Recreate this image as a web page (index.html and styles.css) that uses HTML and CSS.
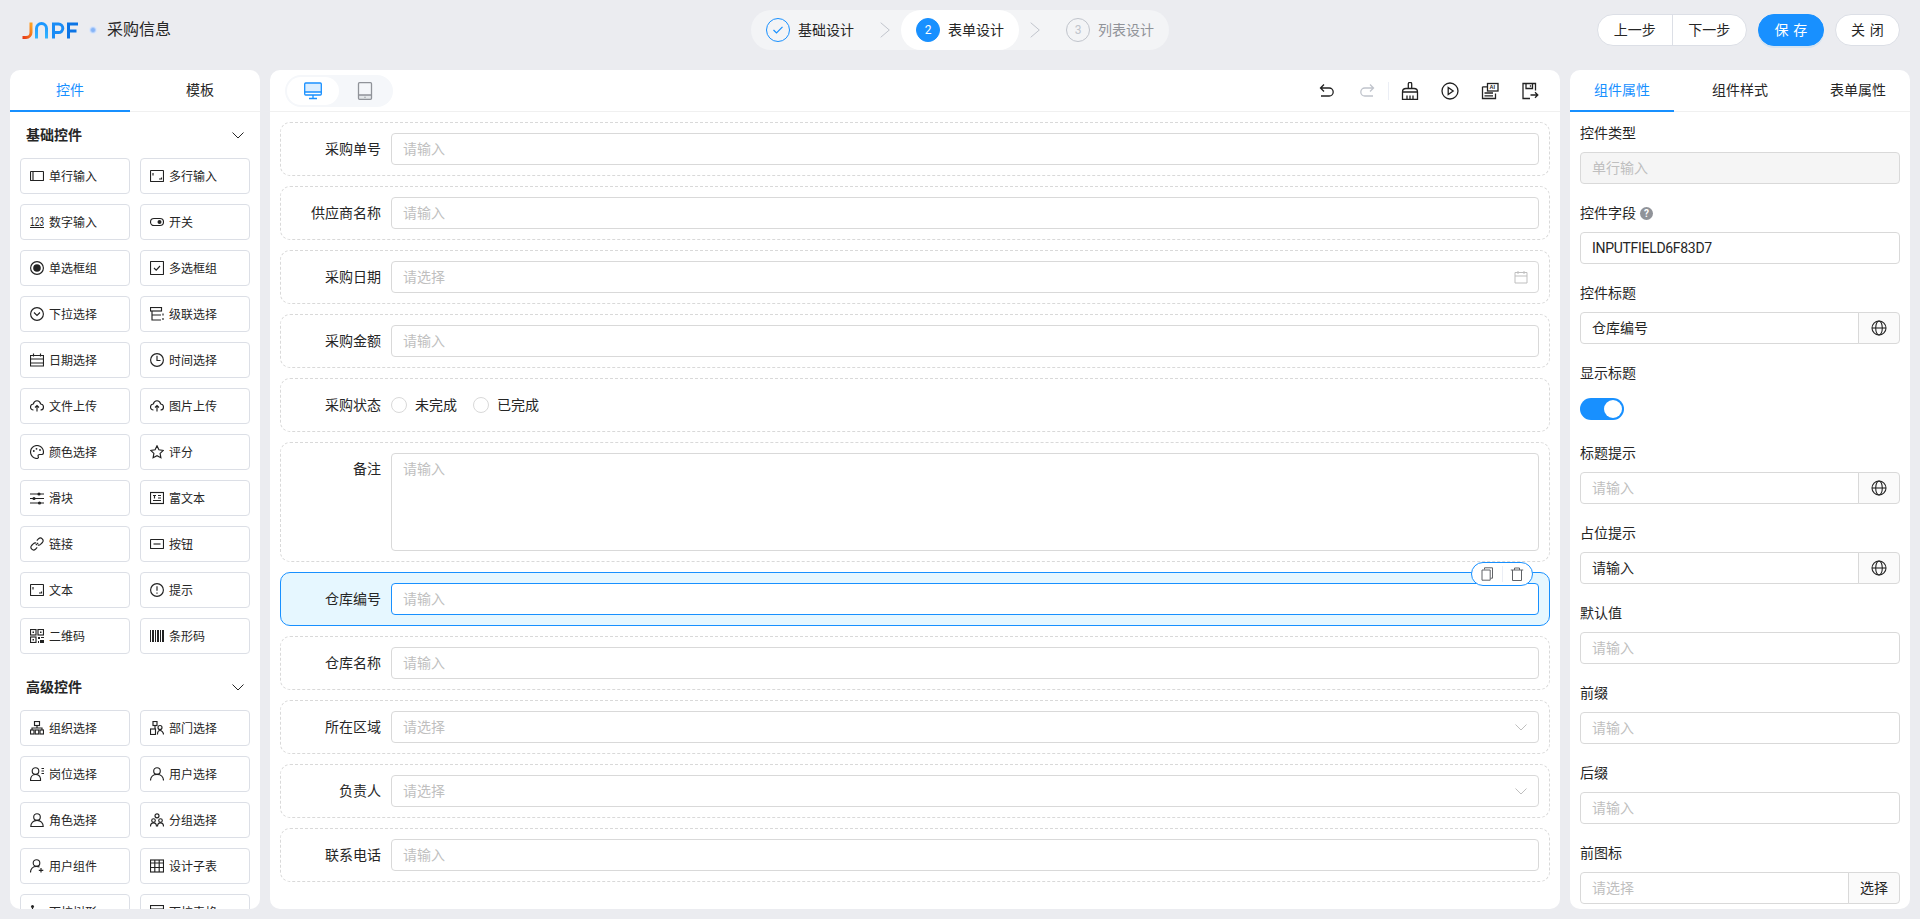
FILE: index.html
```html
<!DOCTYPE html>
<html lang="zh-CN">
<head>
<meta charset="utf-8">
<title>采购信息</title>
<link rel="stylesheet" href="styles.css">
</head>
<body>
<svg class="defs" xmlns="http://www.w3.org/2000/svg">
  <symbol id="i-input" viewBox="0 0 14 14"><rect x=".5" y="2.500" width="13" height="9" rx=".5"/><path d="M3 3v8"/></symbol>
  <symbol id="i-area" viewBox="0 0 14 14"><rect x=".5" y="1.500" width="13" height="11" rx=".5"/><path d="M3 4v2.500M9 10h2.500V8.500"/></symbol>
  <symbol id="i-num" viewBox="0 0 14 14"><text x="0" y="10.500" class="svgt" textLength="14" lengthAdjust="spacingAndGlyphs">123</text><path d="M0 12.500h14"/></symbol>
  <symbol id="i-switch" viewBox="0 0 14 14"><rect x=".5" y="3.500" width="13" height="7" rx="3.500"/><circle cx="9.500" cy="7" r="2" class="fill"/></symbol>
  <symbol id="i-radio" viewBox="0 0 14 14"><circle cx="7" cy="7" r="6.400"/><circle cx="7" cy="7" r="3.800" class="fill"/></symbol>
  <symbol id="i-check" viewBox="0 0 14 14"><rect x=".5" y=".5" width="13" height="13" rx=".5"/><path d="M4 7l2.200 2.200L10 5"/></symbol>
  <symbol id="i-select" viewBox="0 0 14 14"><circle cx="7" cy="7" r="6.400"/><path d="M4 5.500L7 8.500 10 5.500"/></symbol>
  <symbol id="i-casc" viewBox="0 0 14 14"><rect x=".5" y=".5" width="11" height="3.500"/><path d="M2 4v9h9M2 8h9"/><path d="M13 6.500v2M13 11v2"/></symbol>
  <symbol id="i-date" viewBox="0 0 14 14"><path d="M.5 2.500h13v10.500H.5zM3.500 .5v3M10.500 .5v3M.5 6h13M.5 10h13"/></symbol>
  <symbol id="i-time" viewBox="0 0 14 14"><circle cx="7" cy="7" r="6.400"/><path d="M7 2.800V7.500h3.500"/></symbol>
  <symbol id="i-upload" viewBox="0 0 14 14"><path d="M3.500 11C1.700 11 .5 9.600 .5 8c0-1.600 1.200-2.900 2.800-3C3.800 3 5.300 1.700 7 1.700S10.200 3 10.700 5c1.600.1 2.800 1.400 2.800 3 0 1.600-1.200 3-3 3M7 12.500V6.500M5 8.500l2-2 2 2"/></symbol>
  <symbol id="i-color" viewBox="0 0 14 14"><path d="M7 .5a6.500 6.500 0 1 0 0 13c1.400 0 1.700-1.100 1.200-2-.5-1 .2-2 1.300-2h2.300c1 0 1.700-.8 1.700-2.200C13.500 3.300 10.600 .5 7 .5z"/><circle cx="3.800" cy="6" r=".9" class="fill"/><circle cx="6.500" cy="3.800" r=".9" class="fill"/><circle cx="10" cy="5" r=".9" class="fill"/></symbol>
  <symbol id="i-star" viewBox="0 0 14 14"><path d="M7 .8l1.900 4 4.400.6-3.200 3 .8 4.400L7 10.700l-3.900 2.100.8-4.400-3.200-3 4.400-.6z"/></symbol>
  <symbol id="i-slider" viewBox="0 0 14 14"><path d="M0 3h14M0 7.500h14M0 12h14"/><circle cx="9" cy="3" r="1.600" class="fill"/><circle cx="4" cy="7.500" r="1.600" class="fill"/><circle cx="9.500" cy="12" r="1.600" class="fill"/></symbol>
  <symbol id="i-rich" viewBox="0 0 14 14"><rect x=".5" y="1.500" width="13" height="11"/><path d="M3 4.500h3M4.500 4.500v3M8 4.500h3M8 7h3M3 9.500h8"/></symbol>
  <symbol id="i-link" viewBox="0 0 14 14"><path d="M5.800 8.200l2.400-2.400M6.800 3.600l1.800-1.900a2.700 2.700 0 0 1 3.800 3.800l-1.900 1.900a2.700 2.700 0 0 1-2.700.6M7.200 10.400l-1.800 1.900a2.700 2.700 0 0 1-3.800-3.800l1.900-1.900a2.700 2.700 0 0 1 2.700-.6"/></symbol>
  <symbol id="i-btn" viewBox="0 0 14 14"><rect x=".5" y="2.500" width="13" height="9" rx=".5"/><path d="M3.500 7h7"/></symbol>
  <symbol id="i-tip" viewBox="0 0 14 14"><circle cx="7" cy="7" r="6.400"/><path d="M7 3.300v4.500M7 9.500v1.300"/></symbol>
  <symbol id="i-qr" viewBox="0 0 14 14"><rect x=".5" y=".5" width="5.500" height="5.500"/><rect x="8" y=".5" width="5.500" height="5.500"/><rect x=".5" y="8" width="5.500" height="5.500"/><rect x="2.500" y="2.500" width="1.500" height="1.500" class="fill"/><rect x="10" y="2.500" width="1.500" height="1.500" class="fill"/><rect x="2.500" y="10" width="1.500" height="1.500" class="fill"/><rect x="8" y="8" width="2" height="2" class="fill"/><rect x="11" y="8" width="3" height="1" class="fill"/><rect x="10" y="11" width="4" height="3" class="fill"/><rect x="8" y="12" width="1" height="2" class="fill"/></symbol>
  <symbol id="i-bar" viewBox="0 0 14 14"><rect x="0" y="1" width="1" height="12" class="fill"/><rect x="2" y="1" width="2" height="12" class="fill"/><rect x="5" y="1" width="1" height="12" class="fill"/><rect x="7" y="1" width="2" height="12" class="fill"/><rect x="10" y="1" width="1" height="12" class="fill"/><rect x="12" y="1" width="2" height="12" class="fill"/></symbol>
  <symbol id="i-org" viewBox="0 0 14 14"><rect x="4.500" y=".5" width="5" height="4"/><path d="M7 4.500V7M2 9V7h10v2"/><rect x=".5" y="9" width="3.500" height="4"/><rect x="5.250" y="9" width="3.500" height="4"/><rect x="10" y="9" width="3.500" height="4"/></symbol>
  <symbol id="i-dept" viewBox="0 0 14 14"><rect x="3" y=".5" width="4" height="4"/><rect x=".5" y="8" width="5" height="5.500"/><circle cx="10" cy="6.500" r="2"/><path d="M7.500 13.500c0-2.500 1-4 2.500-4s3.500 1.500 3.500 4M5 4.500V8"/></symbol>
  <symbol id="i-post" viewBox="0 0 14 14"><circle cx="5.500" cy="4" r="3.300"/><path d="M.5 13.500c0-3.500 2-6 5-6s4.500 1.500 5 4v2zM11.500 1.500H14M11.500 4H14M11.500 6.500H14"/></symbol>
  <symbol id="i-user" viewBox="0 0 14 14"><circle cx="7" cy="4" r="3.300"/><path d="M.5 13.500c0-3.500 2.500-6.200 6.500-6.200s6.500 2.700 6.500 6.200"/></symbol>
  <symbol id="i-role" viewBox="0 0 14 14"><circle cx="7" cy="4" r="3.300"/><path d="M.8 13.500c0-3.500 2.500-6.200 6.200-6.200s6.200 2.700 6.200 6.200z"/></symbol>
  <symbol id="i-group" viewBox="0 0 14 14"><circle cx="7" cy="2.800" r="2"/><circle cx="3.500" cy="7.500" r="1.800"/><circle cx="10.500" cy="7.500" r="1.800"/><path d="M.5 13.500c0-2.300 1.200-3.700 3-3.700s3 1.400 3 3.700M7.500 13.500c0-2.300 1.200-3.700 3-3.700s3 1.400 3 3.700"/></symbol>
  <symbol id="i-ucomp" viewBox="0 0 14 14"><circle cx="6.500" cy="4" r="3.300"/><path d="M.5 13.500c0-3.500 2.300-6.200 6-6.200 1.200 0 2.300.3 3 .8M11 9v4.500M8.800 11.300h4.500"/></symbol>
  <symbol id="i-table" viewBox="0 0 14 14"><rect x=".5" y="1" width="13" height="12"/><path d="M.5 4h13M.5 8.500h13M4.800 1v12M9.200 1v12"/></symbol>
  <symbol id="i-tree" viewBox="0 0 14 14"><circle cx="2.500" cy="1.500" r="1.500" class="fill"/><path d="M2.500 3v8H13M2.500 6.500H13"/></symbol>
  <symbol id="i-dtable" viewBox="0 0 14 14"><rect x=".5" y=".5" width="13" height="13"/><path d="M.5 4h13M.5 8.500h13"/></symbol>

  <symbol id="t-undo" viewBox="0 0 18 18"><path d="M6 2.500L2.500 6 6 9.500M2.500 6h8.700a3.800 3.800 0 0 1 0 8H3"/></symbol>
  <symbol id="t-redo" viewBox="0 0 18 18"><path d="M12 2.500L15.500 6 12 9.500M15.500 6H6.800a3.800 3.800 0 0 0 0 8H15"/></symbol>
  <symbol id="t-brush" viewBox="0 0 18 18"><path d="M7.300 6.500V2a1.700 1.700 0 0 1 3.400 0v4.500M1.500 10C1.500 8 3 6.500 5 6.500h8c2 0 3.500 1.500 3.500 3.500zM1.500 10v7.500h15V10M6 13.500v4M9 13.500v4M12 13.500v4"/></symbol>
  <symbol id="t-play" viewBox="0 0 18 18"><circle cx="9" cy="9" r="8"/><path d="M7.200 5.500v7l5-3.500z"/></symbol>
  <symbol id="t-ai" viewBox="0 0 18 18"><path d="M1.500 4.800h5M1.500 4.800v11.700h13v-5M3.500 11h8.500M3.500 13.800h8.500"/><rect x="6.500" y="1.500" width="10.500" height="7.500"/><text x="8.500" y="7.300" class="svgai">AI</text></symbol>
  <symbol id="t-save" viewBox="0 0 18 18"><path d="M9 16.500H2V1.500h12.500v7M5 1.500v5h6.500v-5M16.800 13H9.500M14 10.300l2.800 2.700-2.800 2.700M9.500 3.300v1.500"/></symbol>

  <symbol id="d-pc" viewBox="0 0 18 18"><rect x=".7" y="1" width="16.600" height="12" rx="1"/><path d="M.7 10h16.600M9 13v3M5 16.500h8"/><rect x="1" y="1.500" width="16" height="8.500" class="tint"/></symbol>
  <symbol id="d-pad" viewBox="0 0 18 18"><rect x="2.500" y=".7" width="13" height="16.600" rx="1"/><path d="M2.500 13h13M9 14.800v.9"/><rect x="3" y="13" width="12" height="4" class="tint"/></symbol>
  <symbol id="u-copy" viewBox="0 0 14 14"><path d="M4.500 2.500V.8h8v10.400h-2M2 3h8.200v10.200H2z"/></symbol>
  <symbol id="u-trash" viewBox="0 0 14 14"><path d="M.8 3h12.400M4.500 3V1h5v2M2.500 3v10.500h9V3"/></symbol>
  <symbol id="u-cal" viewBox="0 0 14 14"><path d="M1 2.500h12v10.500H1zM1 6h12M4 1v3M10 1v3"/></symbol>
  <symbol id="u-down" viewBox="0 0 14 14"><path d="M1.500 4.500L7 10l5.500-5.500"/></symbol>
  <symbol id="u-globe" viewBox="0 0 16 16"><circle cx="8" cy="8" r="7"/><ellipse cx="8" cy="8" rx="3.300" ry="7"/><path d="M1 8h14"/></symbol>
  <symbol id="u-chev" viewBox="0 0 10 16"><path d="M.7 .7L9.300 8 .7 15.300"/></symbol>
</svg>

<header class="topbar">
  <div class="brand">
    <svg class="logo" viewBox="0 0 56 17" role="img" aria-label="JNPF">
      <defs>
        <linearGradient id="lg-j" x1="0.800" y1="0" x2="0" y2="1"><stop offset="0" stop-color="#ffa020"/><stop offset="1" stop-color="#e63a1a"/></linearGradient>
        <linearGradient id="lg-n" x1="0" y1="0" x2="0" y2="1"><stop offset="0" stop-color="#1a96ff"/><stop offset="1" stop-color="#35b6ff"/></linearGradient>
      </defs>
      <path d="M9 .5V10.500a5 5 0 0 1-5 5H.5" stroke="url(#lg-j)"/>
      <path d="M14.500 16.500V6.500a5 5 0 0 1 10 0v10" stroke="url(#lg-n)"/>
      <path d="M31.500 16.500V2H36.500a4.300 4.300 0 0 1 0 8.600H31.500" stroke="#1a8cf5"/>
      <path d="M46.500 16.500V2H56M46.500 9H54.500" stroke="#0b74e5"/>
    </svg>
    <span class="brand-dot"></span>
    <span class="brand-title">采购信息</span>
  </div>
  <nav class="steps">
    <div class="step"><span class="step-no done"><svg viewBox="0 0 12 12" class="step-check"><path d="M1.500 6l3 3L10.500 2.800"/></svg></span><span>基础设计</span></div>
    <svg class="step-sep"><use href="#u-chev"/></svg>
    <div class="step active"><span class="step-no cur">2</span><span>表单设计</span></div>
    <svg class="step-sep"><use href="#u-chev"/></svg>
    <div class="step wait"><span class="step-no">3</span><span>列表设计</span></div>
  </nav>
  <div class="actions">
    <div class="btn-group"><span class="btn-seg">上一步</span><span class="btn-seg">下一步</span></div>
    <span class="btn primary"><span class="two">保存</span></span>
    <span class="btn"><span class="two">关闭</span></span>
  </div>
</header>

<main class="workspace">
  <aside class="panel left">
    <div class="tabs tabs-left"><span class="tab on">控件</span><span class="tab">模板</span></div>
    <div class="palette">
      <div class="pal-head"><span>基础控件</span><svg class="ic pal-arrow"><use href="#u-down"/></svg></div>
      <div class="pal-grid">
        <div class="pal-item"><svg class="ic"><use href="#i-input"/></svg><span>单行输入</span></div>
        <div class="pal-item"><svg class="ic"><use href="#i-area"/></svg><span>多行输入</span></div>
        <div class="pal-item"><svg class="ic"><use href="#i-num"/></svg><span>数字输入</span></div>
        <div class="pal-item"><svg class="ic"><use href="#i-switch"/></svg><span>开关</span></div>
        <div class="pal-item"><svg class="ic"><use href="#i-radio"/></svg><span>单选框组</span></div>
        <div class="pal-item"><svg class="ic"><use href="#i-check"/></svg><span>多选框组</span></div>
        <div class="pal-item"><svg class="ic"><use href="#i-select"/></svg><span>下拉选择</span></div>
        <div class="pal-item"><svg class="ic"><use href="#i-casc"/></svg><span>级联选择</span></div>
        <div class="pal-item"><svg class="ic"><use href="#i-date"/></svg><span>日期选择</span></div>
        <div class="pal-item"><svg class="ic"><use href="#i-time"/></svg><span>时间选择</span></div>
        <div class="pal-item"><svg class="ic"><use href="#i-upload"/></svg><span>文件上传</span></div>
        <div class="pal-item"><svg class="ic"><use href="#i-upload"/></svg><span>图片上传</span></div>
        <div class="pal-item"><svg class="ic"><use href="#i-color"/></svg><span>颜色选择</span></div>
        <div class="pal-item"><svg class="ic"><use href="#i-star"/></svg><span>评分</span></div>
        <div class="pal-item"><svg class="ic"><use href="#i-slider"/></svg><span>滑块</span></div>
        <div class="pal-item"><svg class="ic"><use href="#i-rich"/></svg><span>富文本</span></div>
        <div class="pal-item"><svg class="ic"><use href="#i-link"/></svg><span>链接</span></div>
        <div class="pal-item"><svg class="ic"><use href="#i-btn"/></svg><span>按钮</span></div>
        <div class="pal-item"><svg class="ic"><use href="#i-area"/></svg><span>文本</span></div>
        <div class="pal-item"><svg class="ic"><use href="#i-tip"/></svg><span>提示</span></div>
        <div class="pal-item"><svg class="ic"><use href="#i-qr"/></svg><span>二维码</span></div>
        <div class="pal-item"><svg class="ic"><use href="#i-bar"/></svg><span>条形码</span></div>
      </div>
      <div class="pal-head"><span>高级控件</span><svg class="ic pal-arrow"><use href="#u-down"/></svg></div>
      <div class="pal-grid">
        <div class="pal-item"><svg class="ic"><use href="#i-org"/></svg><span>组织选择</span></div>
        <div class="pal-item"><svg class="ic"><use href="#i-dept"/></svg><span>部门选择</span></div>
        <div class="pal-item"><svg class="ic"><use href="#i-post"/></svg><span>岗位选择</span></div>
        <div class="pal-item"><svg class="ic"><use href="#i-user"/></svg><span>用户选择</span></div>
        <div class="pal-item"><svg class="ic"><use href="#i-role"/></svg><span>角色选择</span></div>
        <div class="pal-item"><svg class="ic"><use href="#i-group"/></svg><span>分组选择</span></div>
        <div class="pal-item"><svg class="ic"><use href="#i-ucomp"/></svg><span>用户组件</span></div>
        <div class="pal-item"><svg class="ic"><use href="#i-table"/></svg><span>设计子表</span></div>
        <div class="pal-item"><svg class="ic"><use href="#i-tree"/></svg><span>下拉树形</span></div>
        <div class="pal-item"><svg class="ic"><use href="#i-dtable"/></svg><span>下拉表格</span></div>
      </div>
    </div>
  </aside>

  <section class="panel center">
    <div class="toolbar">
      <div class="device">
        <span class="dev on"><svg class="dev-ic"><use href="#d-pc"/></svg></span>
        <span class="dev"><svg class="dev-ic"><use href="#d-pad"/></svg></span>
      </div>
      <div class="tools">
        <span class="tool"><svg class="tool-ic"><use href="#t-undo"/></svg></span>
        <span class="tool off"><svg class="tool-ic"><use href="#t-redo"/></svg></span>
        <span class="tool-div"></span>
        <span class="tool"><svg class="tool-ic"><use href="#t-brush"/></svg></span>
        <span class="tool"><svg class="tool-ic"><use href="#t-play"/></svg></span>
        <span class="tool"><svg class="tool-ic"><use href="#t-ai"/></svg></span>
        <span class="tool"><svg class="tool-ic"><use href="#t-save"/></svg></span>
      </div>
    </div>
    <div class="canvas">
      <div class="frow"><label class="flabel">采购单号</label><div class="inp ph">请输入</div></div>
      <div class="frow"><label class="flabel">供应商名称</label><div class="inp ph">请输入</div></div>
      <div class="frow"><label class="flabel">采购日期</label><div class="inp ph"><span>请选择</span><svg class="suffix"><use href="#u-cal"/></svg></div></div>
      <div class="frow"><label class="flabel">采购金额</label><div class="inp ph">请输入</div></div>
      <div class="frow"><label class="flabel">采购状态</label>
        <div class="radios"><span class="radio"><i></i>未完成</span><span class="radio"><i></i>已完成</span></div>
      </div>
      <div class="frow"><label class="flabel">备注</label><div class="inp ph area">请输入</div></div>
      <div class="frow sel"><label class="flabel">仓库编号</label><div class="inp ph">请输入</div>
        <div class="row-act"><svg class="act-ic"><use href="#u-copy"/></svg><span class="act-div"></span><svg class="act-ic"><use href="#u-trash"/></svg></div>
      </div>
      <div class="frow"><label class="flabel">仓库名称</label><div class="inp ph">请输入</div></div>
      <div class="frow"><label class="flabel">所在区域</label><div class="inp ph"><span>请选择</span><svg class="suffix"><use href="#u-down"/></svg></div></div>
      <div class="frow"><label class="flabel">负责人</label><div class="inp ph"><span>请选择</span><svg class="suffix"><use href="#u-down"/></svg></div></div>
      <div class="frow"><label class="flabel">联系电话</label><div class="inp ph">请输入</div></div>
    </div>
  </section>

  <aside class="panel right">
    <div class="tabs tabs-right"><span class="tab on">组件属性</span><span class="tab">组件样式</span><span class="tab">表单属性</span></div>
    <div class="props">
      <div class="prop"><div class="plabel">控件类型</div><div class="inp disabled">单行输入</div></div>
      <div class="prop"><div class="plabel">控件字段<span class="help">?</span></div><div class="inp latin">INPUTFIELD6F83D7</div></div>
      <div class="prop"><div class="plabel">控件标题</div><div class="igroup"><div class="inp">仓库编号</div><span class="addon"><svg class="globe"><use href="#u-globe"/></svg></span></div></div>
      <div class="prop"><div class="plabel">显示标题</div><div class="switch-wrap"><span class="switch"></span></div></div>
      <div class="prop"><div class="plabel">标题提示</div><div class="igroup"><div class="inp ph">请输入</div><span class="addon"><svg class="globe"><use href="#u-globe"/></svg></span></div></div>
      <div class="prop"><div class="plabel">占位提示</div><div class="igroup"><div class="inp">请输入</div><span class="addon"><svg class="globe"><use href="#u-globe"/></svg></span></div></div>
      <div class="prop"><div class="plabel">默认值</div><div class="inp ph">请输入</div></div>
      <div class="prop"><div class="plabel">前缀</div><div class="inp ph">请输入</div></div>
      <div class="prop"><div class="plabel">后缀</div><div class="inp ph">请输入</div></div>
      <div class="prop"><div class="plabel">前图标</div><div class="igroup"><div class="inp ph">请选择</div><span class="addon text">选择</span></div></div>
    </div>
  </aside>
</main>
</body>
</html>
```
FILE: styles.css
```css
* { box-sizing: border-box; }
html, body { margin: 0; height: 100%; }
body {
  display: flex;
  flex-direction: column;
  height: 919px;
  overflow: hidden;
  background: #ebecf0;
  color: #262626;
  font: 14px/22px Roboto, "Noto Sans CJK SC", sans-serif;
}
.defs { display: none; }

/* shared icon paint */
.ic, .suffix, .tool-ic, .dev-ic, .act-ic, .globe, .step-sep {
  fill: none;
  stroke: currentColor;
  stroke-width: 1;
  flex: none;
}
.fill { fill: currentColor; stroke: none; }
.tint { fill: currentColor; stroke: none; fill-opacity: .16; }
.svgt { font: 13px "Liberation Sans Narrow", "Liberation Sans", sans-serif; fill: currentColor; stroke: none; }
.svgai { font: 700 5.500px "Liberation Sans", sans-serif; fill: currentColor; stroke: none; }

/* top bar */
.topbar {
  flex: none;
  height: 70px;
  padding: 10px 20px 20px;
  display: grid;
  grid-template-columns: 1fr auto 1fr;
  align-items: start;
}
.brand { display: flex; align-items: center; height: 40px; padding-left: 2px; }
.logo { width: 56px; height: 17px; fill: none; stroke-width: 3; overflow: hidden; }
.brand-dot {
  width: 8px; height: 8px; margin: 0 10px 0 11px;
  border-radius: 50%;
  background: radial-gradient(circle, #86b4f7 0 25%, #dbe7fb 60%, transparent 100%);
}
.brand-title { font-size: 16px; }

.steps {
  display: flex;
  align-items: center;
  height: 40px;
  background: #f3f4f6;
  border-radius: 20px;
}
.step {
  display: flex;
  align-items: center;
  gap: 8px;
  height: 40px;
  padding: 0 15px;
  border-radius: 20px;
}
.step.active { background: #fff; }
.step.wait { color: #909399; }
.step-no {
  width: 24px; height: 24px;
  display: flex; align-items: center; justify-content: center;
  border: 1px solid #c0c4cc;
  border-radius: 50%;
  font-size: 12px;
  color: #c0c4cc;
}
.step-no.done { border-color: #1890ff; }
.step-no.cur { background: #1890ff; border-color: #1890ff; color: #fff; }
.step-check { width: 12px; height: 12px; fill: none; stroke: #1890ff; stroke-width: 1.200; }
.step-sep { width: 10px; height: 16px; margin: 0 11px; color: #c0c4cc; }

.actions { display: flex; justify-content: flex-end; align-items: center; gap: 11px; padding-top: 4px; }
.btn-group { display: flex; width: 150px; height: 32px; background: #fff; border: 1px solid #dcdfe6; border-radius: 16px; }
.btn-seg { flex: 1; line-height: 30px; text-align: center; }
.btn-seg + .btn-seg { border-left: 1px solid #dcdfe6; }
.btn {
  width: 65px; height: 32px;
  display: flex; align-items: center; justify-content: center;
  background: #fff;
  border: 1px solid #dcdfe6;
  border-radius: 16px;
}
.btn.primary {
  width: 66px;
  background: #1890ff;
  border-color: #1890ff;
  color: #fff;
  box-shadow: 0 2px 0 rgba(5, 145, 255, .1);
}
.two { letter-spacing: .34em; margin-right: -.34em; }

/* panels */
.workspace {
  flex: 1;
  min-height: 0;
  display: flex;
  gap: 10px;
  padding: 0 10px 10px;
}
.panel { background: #fff; border-radius: 10px; overflow: hidden; display: flex; flex-direction: column; }
.left { width: 250px; flex: none; }
.center { flex: 1; min-width: 0; }
.right { width: 340px; flex: none; }

.tabs { flex: none; display: flex; height: 42px; border-bottom: 1px solid #f0f0f0; }
.tab { line-height: 40px; text-align: center; height: 42px; }
.tab.on { color: #1890ff; border-bottom: 2px solid #1890ff; }
.tabs-left { gap: 10px; }
.tabs-left .tab { width: 120px; }
.tabs-right { gap: 14px; }
.tabs-right .tab { width: 104px; }

/* palette */
.palette { flex: 1; min-height: 0; overflow: hidden; }
.pal-head {
  height: 46px;
  padding: 0 16px;
  display: flex;
  align-items: center;
  justify-content: space-between;
  font-weight: 700;
}
.pal-arrow { width: 14px; height: 14px; margin-right: -1px; }
.pal-grid {
  display: grid;
  grid-template-columns: 110px 110px;
  grid-auto-rows: 36px;
  gap: 10px;
  padding: 0 10px;
  margin-bottom: 10px;
}
.pal-item {
  display: flex;
  align-items: center;
  gap: 5px;
  padding-left: 9px;
  border: 1px solid #dcdfe6;
  border-radius: 4px;
  font-size: 12px;
  line-height: 18px;
}
.pal-item span { padding-top: 2px; }
.pal-item .ic { width: 14px; height: 14px; color: #222; stroke-width: 1.150; }

/* center */
.toolbar {
  flex: none;
  height: 42px;
  display: flex;
  align-items: center;
  justify-content: space-between;
  padding: 0 10px 0 15px;
  border-bottom: 1px solid #f0f0f0;
}
.device { display: flex; padding: 2px; width: 108px; height: 32px; background: #f5f7fa; border-radius: 16px; }
.dev { width: 52px; display: flex; align-items: center; justify-content: center; border-radius: 14px; color: #909399; }
.dev.on { background: #fff; color: #1890ff; }
.dev-ic { width: 18px; height: 18px; stroke-width: 1.300; }
.tools { display: flex; align-items: center; }
.tool { width: 40px; display: flex; justify-content: center; color: #222; }
.tool.off { color: #c0c4cc; }
.tool-ic { width: 18px; height: 18px; stroke-width: 1.300; }
.tool-div { width: 1px; height: 18px; margin: 0 1px; background: #ebeef5; }

.canvas { flex: 1; min-height: 0; padding: 10px; display: flex; flex-direction: column; gap: 10px; }
.frow {
  position: relative;
  display: flex;
  align-items: flex-start;
  padding: 10px;
  border: 1px dashed #d9d9d9;
  border-radius: 10px;
}
.flabel { width: 90px; flex: none; margin-right: 10px; text-align: right; line-height: 32px; }
.inp {
  flex: 1;
  min-width: 0;
  height: 32px;
  display: flex;
  align-items: center;
  justify-content: space-between;
  padding: 0 11px;
  background: #fff;
  border: 1px solid #d9d9d9;
  border-radius: 4px;
}
.latin { letter-spacing: -.3px; }
.ph { color: #bfbfbf; }
.area { height: 98px; align-items: flex-start; padding-top: 4px; }
.suffix { width: 14px; height: 14px; color: #bfbfbf; margin-right: -1px; }
.radios { display: flex; gap: 16px; height: 32px; align-items: center; }
.radio { display: flex; align-items: center; gap: 8px; }
.radio i { width: 16px; height: 16px; border: 1px solid #d9d9d9; border-radius: 50%; background: #fff; }
.frow.sel { background: #e6f7ff; border: 1px solid #1890ff; }
.frow.sel .inp { border-color: #1890ff; }
.row-act {
  position: absolute;
  top: -11px;
  right: 16px;
  width: 62px;
  height: 24px;
  display: flex;
  align-items: center;
  justify-content: space-between;
  padding: 0 8px;
  background: #fff;
  border: 1px solid #1890ff;
  border-radius: 12px;
  color: #606266;
}
.act-ic { width: 14px; height: 14px; }
.act-div { width: 1px; height: 16px; background: #ebeef5; }

/* properties */
.props { flex: 1; min-height: 0; padding: 10px 10px 0; overflow: hidden; }
.prop { margin-bottom: 18px; }
.plabel { display: flex; align-items: center; gap: 4px; height: 22px; margin-bottom: 8px; }
.help {
  width: 13px; height: 13px;
  border-radius: 50%;
  background: #909399;
  color: #fff;
  font-size: 10px;
  font-weight: 700;
  line-height: 13px;
  text-align: center;
}
.disabled { background: #f5f5f5; color: #bfbfbf; }
.igroup { display: flex; }
.igroup .inp { border-radius: 4px 0 0 4px; }
.addon {
  flex: none;
  width: 42px;
  height: 32px;
  display: flex;
  align-items: center;
  justify-content: center;
  margin-left: -1px;
  background: #fafafa;
  border: 1px solid #d9d9d9;
  border-radius: 0 4px 4px 0;
}
.addon.text { width: 52px; }
.globe { width: 16px; height: 16px; color: #262626; stroke-width: 1.100; }
.switch-wrap { height: 32px; padding-top: 6px; }
.switch {
  position: relative;
  display: block;
  width: 44px;
  height: 22px;
  background: #1890ff;
  border-radius: 11px;
}
.switch::after {
  content: "";
  position: absolute;
  top: 2px;
  right: 2px;
  width: 18px;
  height: 18px;
  background: #fff;
  border-radius: 50%;
}
```
